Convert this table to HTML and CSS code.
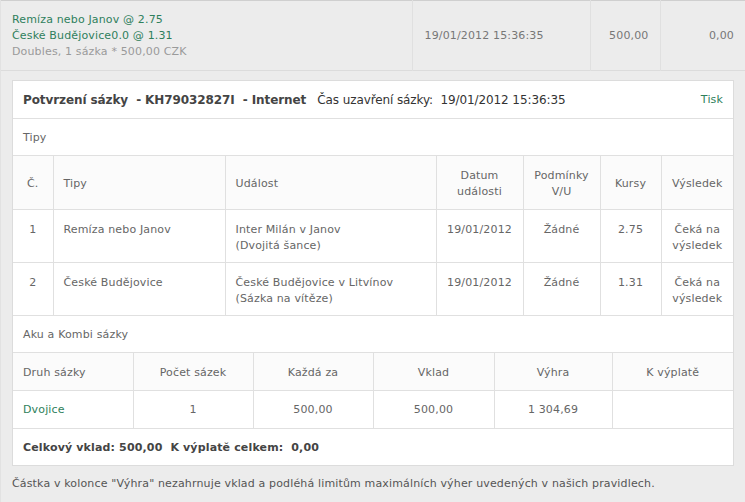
FILE: index.html
```html
<!DOCTYPE html>
<html lang="cs">
<head>
<meta charset="utf-8">
<title>Potvrzení sázky</title>
<link rel="stylesheet" href="styles.css">
</head>
<body>
<div class="page">
  <table class="summary">
    <colgroup><col class="c-desc"><col class="c-date"><col class="c-stake"><col></colgroup>
    <tr>
      <td class="desc">
        <div class="green">Remíza nebo Janov @ 2.75</div>
        <div class="green">České Budějovice0.0 @ 1.31</div>
        <div class="muted">Doubles, 1 sázka * 500,00 CZK</div>
      </td>
      <td class="date">19/01/2012 15:36:35</td>
      <td class="right">500,00</td>
      <td class="right">0,00</td>
    </tr>
  </table>

  <div class="card">
    <div class="card-head">
      <div class="title"><b>Potvrzení sázky &nbsp;- KH79032827I &nbsp;- Internet</b>&nbsp;&nbsp; Čas uzavření sázky:&nbsp; 19/01/2012 15:36:35</div>
      <a class="green link">Tisk</a>
    </div>
    <div class="section">Tipy</div>
    <table class="grid tips">
      <colgroup><col style="width:40px"><col style="width:172px"><col style="width:211px"><col style="width:87px"><col style="width:77px"><col style="width:61px"><col></colgroup>
      <tr class="head">
        <th class="center">Č.</th>
        <th>Tipy</th>
        <th>Událost</th>
        <th class="center">Datum<br>události</th>
        <th class="center">Podmínky<br>V/U</th>
        <th class="center">Kursy</th>
        <th class="center">Výsledek</th>
      </tr>
      <tr class="row">
        <td class="center">1</td>
        <td>Remíza nebo Janov</td>
        <td>Inter Milán v Janov<br>(Dvojitá šance)</td>
        <td class="center">19/01/2012</td>
        <td class="center">Žádné</td>
        <td class="center">2.75</td>
        <td class="center">Čeká na<br>výsledek</td>
      </tr>
      <tr class="row">
        <td class="center">2</td>
        <td>České Budějovice</td>
        <td>České Budějovice v Litvínov<br>(Sázka na vítěze)</td>
        <td class="center">19/01/2012</td>
        <td class="center">Žádné</td>
        <td class="center">1.31</td>
        <td class="center">Čeká na<br>výsledek</td>
      </tr>
    </table>
    <div class="section">Aku a Kombi sázky</div>
    <table class="grid combi">
      <colgroup><col style="width:120px"><col style="width:120px"><col style="width:120px"><col style="width:121px"><col style="width:118px"><col></colgroup>
      <tr>
        <th>Druh sázky</th>
        <th class="center">Počet sázek</th>
        <th class="center">Každá za</th>
        <th class="center">Vklad</th>
        <th class="center">Výhra</th>
        <th class="center">K výplatě</th>
      </tr>
      <tr>
        <td class="green">Dvojice</td>
        <td class="center">1</td>
        <td class="center">500,00</td>
        <td class="center">500,00</td>
        <td class="center">1 304,69</td>
        <td></td>
      </tr>
    </table>
    <div class="totals"><b>Celkový vklad: 500,00 &nbsp;K výplatě celkem:&nbsp; 0,00</b></div>
  </div>
  <p class="note">Částka v kolonce "Výhra" nezahrnuje vklad a podléhá limitům maximálních výher uvedených v našich pravidlech.</p>
</div>
</body>
</html>
```

FILE: styles.css
```css
html, body {
  margin: 0;
  padding: 0;
  background: #ececec;
}
body {
  font-family: "DejaVu Sans", Verdana, sans-serif;
  font-size: 11px;
  line-height: 16px;
  letter-spacing: 0.15px;
  color: #666;
}
.page {
  width: 745px;
  height: 502px;
  background: #ececec;
  overflow: hidden;
  border-left: 1px solid #e2e2e2;
  box-sizing: border-box;
}
.green { color: #2f7f5c; }
.muted { color: #9a9a9a; }
.center { text-align: center; }
.right { text-align: right; }

.summary {
  width: 100%;
  table-layout: fixed;
  border-collapse: collapse;
  border-top: 1px solid #cfcfcf;
  border-bottom: 1px solid #dcdcdc;
}
.summary .c-desc { width: 411px; }
.summary .c-date { width: 178px; }
.summary .c-stake { width: 70px; }
.summary td {
  color: #777;
  vertical-align: middle;
  padding: 0 11px;
  border-left: 1px solid #e0e0e0;
  height: 69px;
  box-sizing: border-box;
}
.summary td.desc {
  border-left: none;
  padding: 11px 10px 10px 11px;
}
.summary td.date { padding-left: 12px; }

.card {
  margin: 9px 11px 0 11px;
  background: #fff;
  border: 1px solid #dcdcdc;
}
.card-head {
  display: flex;
  justify-content: space-between;
  align-items: center;
  height: 37px;
  padding: 0 10px 0 10px;
  border-bottom: 1px solid #e0e0e0;
  font-size: 12px;
  letter-spacing: -0.1px;
  color: #333;
}
.card-head b { color: #444; }
.card-head .link {
  font-size: 11px;
  letter-spacing: 0.15px;
  cursor: pointer;
}
.section {
  height: 36px;
  line-height: 37px;
  padding: 0 10px;
  border-bottom: 1px solid #e0e0e0;
}

.grid {
  width: 100%;
  table-layout: fixed;
  border-collapse: collapse;
}
.grid th, .grid td {
  font-weight: normal;
  text-align: left;
  padding: 0 10px;
  border-left: 1px solid #e0e0e0;
  border-bottom: 1px solid #e0e0e0;
  box-sizing: border-box;
}
.grid th.center, .grid td.center { text-align: center; }
.grid th:first-child, .grid td:first-child { border-left: none; }

.tips th {
  height: 53px;
  vertical-align: middle;
  padding-top: 3px;
  background: #fbfbfb;
}
.tips th.center, .tips td.center { padding-left: 4px; padding-right: 4px; }
.tips td {
  height: 53px;
  vertical-align: top;
  padding-top: 12px;
}

.combi th, .combi td {
  height: 38px;
  vertical-align: middle;
}
.combi th { background: #fbfbfb; padding-top: 3px; }

.totals {
  height: 36px;
  line-height: 38px;
  padding: 0 10px;
  color: #444;
}
.note {
  margin: 10px 0 0 11px;
  color: #555;
}
```
